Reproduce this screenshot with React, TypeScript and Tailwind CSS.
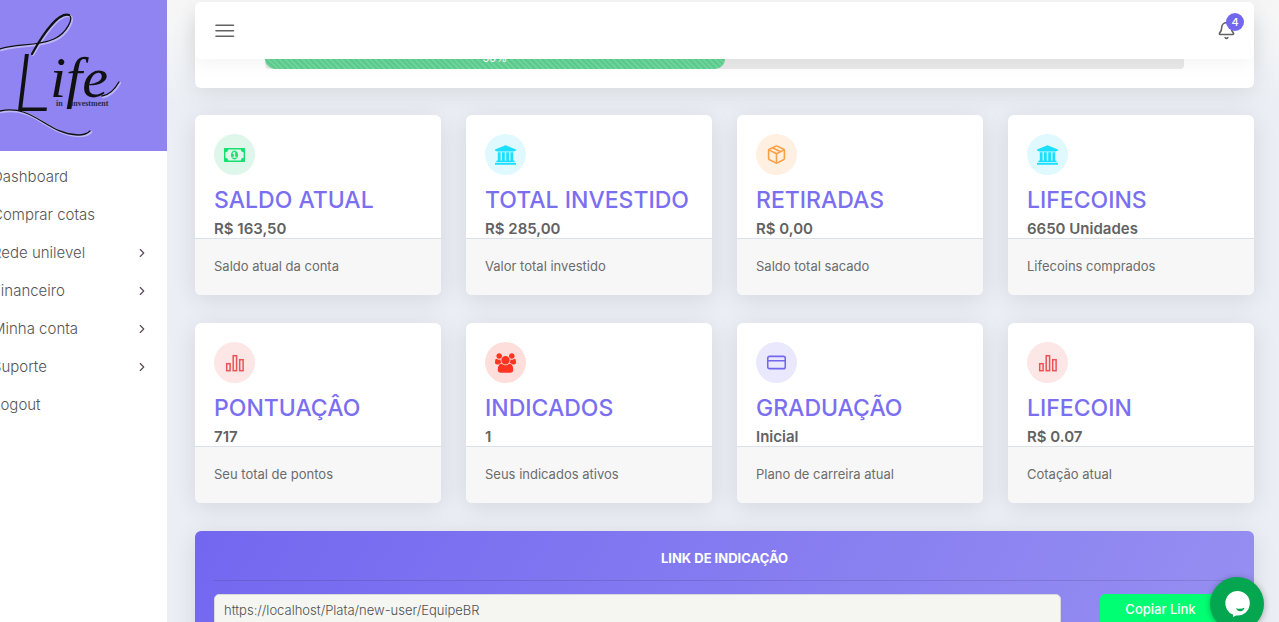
import type { ReactNode } from 'react';
import { Bell, ChevronRight, CreditCard } from 'lucide-react';

function MenuIcon() {
  return (
    <svg viewBox="0 0 22 22" className="size-[22px]" fill="none" stroke="currentColor" strokeWidth="1.6" strokeLinecap="round" aria-hidden="true">
      <path d="M3 5.200h17.500M3 10.700h17.500M3 16.200h17.500" />
    </svg>
  );
}

function MoneyIcon() {
  return (
    <svg viewBox="0 0 1920 1792" className="h-5 w-[21px]" fill="currentColor" aria-hidden="true">
      <path d="M768 1152h384v-96h-128V608H910l-148 137 77 80q42-37 55-57h2v288H768v96zm512-256q0 70-21 142t-59.5 134-101.5 101-138 39-138-39-101-101-59.5-134-21-142 21-142 59.5-134 101-101 138-39 138 39 101.5 101 59.5 134 21 142zM1792 1152V640q-106 0-181-75t-75-181H384q0 106-75 181t-181 75v512q106 0 181 75t75 181h1152q0-106 75-181t181-75zM1920 320v1152q0 26-19 45t-45 19H64q-26 0-45-19t-19-45V320q0-26 19-45t45-19h1792q26 0 45 19t19 45z" fillRule="evenodd" />
    </svg>
  );
}

function BankIcon() {
  return (
    <svg viewBox="0 0 1920 1792" className="h-5 w-[21px]" fill="currentColor" aria-hidden="true">
      <path d="M960 0l960 384v128h-128q0 26-20.5 45T1723 576H197q-28 0-48.5-19T128 512H0V384zM256 640h256v768h128V640h256v768h128V640h256v768h128V640h256v768h59q28 0 48.5 19t20.5 45v64H128v-64q0-26 20.5-45t48.5-19h59V640zm1595 960q28 0 48.5 19t20.5 45v128H0v-128q0-26 20.5-45t48.5-19h1782z" />
    </svg>
  );
}

function BoxIcon() {
  return (
    <svg viewBox="0 0 24 24" className="size-[19px]" fill="none" stroke="currentColor" strokeWidth="2" strokeLinecap="round" strokeLinejoin="round" aria-hidden="true">
      <path d="M12.89 1.45l8 4A2 2 0 0 1 22 7.24v9.53a2 2 0 0 1-1.11 1.79l-8 4a2 2 0 0 1-1.79 0l-8-4a2 2 0 0 1-1.1-1.8V7.24a2 2 0 0 1 1.11-1.79l8-4a2 2 0 0 1 1.78 0z" />
      <path d="M2.32 6.16L12 11l9.68-4.84M12 22.76V11M7 3.5l10 5" />
    </svg>
  );
}

function BarsIcon() {
  return (
    <svg viewBox="0 0 22 22" className="size-[22px]" fill="none" stroke="currentColor" strokeWidth="1.5" aria-hidden="true">
      <rect x="2.7" y="11.7" width="3.4" height="7" />
      <rect x="9.2" y="3.7" width="3.4" height="15" />
      <rect x="15.7" y="7.7" width="3.4" height="11" />
    </svg>
  );
}

function PeopleIcon() {
  return (
    <svg viewBox="-64 0 1920 1792" className="h-5 w-[21px]" fill="currentColor" aria-hidden="true">
      <path d="M529 896q-162 5-265 128H130q-82 0-138-40.5T-64 865q0-353 124-353 6 0 43.5 21t97.5 42.5T320 597q67 0 133-23-5 37-5 66 0 139 81 256zm1071 637q0 120-73 189.5t-194 69.5H459q-121 0-194-69.5T192 1533q0-53 3.5-103.5t14-109T236 1212t43-97.5 62-81 85.5-53.5T538 960q10 0 43 21.5t73 48 107 48 135 21.5 135-21.5 107-48 73-48 43-21.5q61 0 111.5 20t85.5 53.5 62 81 43 97.5 26.5 108.5 14 109 3.5 103.5zM576 256q0 106-75 181t-181 75-181-75-75-181 75-181T320 0t181 75 75 181zm704 384q0 159-112.5 271.5T896 1024 624.5 911.5 512 640t112.5-271.5T896 256t271.5 112.5T1280 640zm576 225q0 78-56 118.5t-138 40.5h-134q-103-123-265-128 81-117 81-256 0-29-5-66 66 23 133 23 59 0 119-21.5t97.5-42.5 43.5-21q124 0 124 353zm-128-609q0 106-75 181t-181 75-181-75-75-181 75-181 181-75 181 75 75 181z" />
    </svg>
  );
}

type Stat = { title: string; value: string; note: string; tone: string; icon: ReactNode };

const stats: Stat[] = [
  { title: 'SALDO ATUAL', value: 'R$ 163,50', note: 'Saldo atual da conta', tone: 'bg-[#dff6ea] text-[#15e070]', icon: <MoneyIcon /> },
  { title: 'TOTAL INVESTIDO', value: 'R$ 285,00', note: 'Valor total investido', tone: 'bg-[#e0f9ff] text-[#1adfff]', icon: <BankIcon /> },
  { title: 'RETIRADAS', value: 'R$ 0,00', note: 'Saldo total sacado', tone: 'bg-[#fff0e2] text-[#ff9f43]', icon: <BoxIcon /> },
  { title: 'LIFECOINS', value: '6650 Unidades', note: 'Lifecoins comprados', tone: 'bg-[#e0f9ff] text-[#1adfff]', icon: <BankIcon /> },
  { title: 'PONTUAÇÂO', value: '717', note: 'Seu total de pontos', tone: 'bg-[#fce6e6] text-[#ea5455]', icon: <BarsIcon /> },
  { title: 'INDICADOS', value: '1', note: 'Seus indicados ativos', tone: 'bg-[#fddeda] text-[#ff3522]', icon: <PeopleIcon /> },
  { title: 'GRADUAÇÃO', value: 'Inicial', note: 'Plano de carreira atual', tone: 'bg-[#eae8fd] text-[#7367f0]', icon: <CreditCard size={21} strokeWidth={1.8} /> },
  { title: 'LIFECOIN', value: 'R$ 0.07', note: 'Cotação atual', tone: 'bg-[#fce6e6] text-[#ea5455]', icon: <BarsIcon /> },
];

const menu = [
  { label: 'Dashboard', nested: false },
  { label: 'Comprar cotas', nested: false },
  { label: 'Rede unilevel', nested: true },
  { label: 'Financeiro', nested: true },
  { label: 'Minha conta', nested: true },
  { label: 'Suporte', nested: true },
  { label: 'Logout', nested: false },
];

function Logo() {
  return (
    <svg viewBox="0 0 167 151" className="ml-auto h-[151px] w-[167px]" role="img" aria-label="Life in investment">
      <g fill="none" stroke="#dcd8fb" strokeLinecap="round" strokeWidth="2.5" opacity=".6" transform="translate(1 1)">
        <path d="M0 49C17 43 36 47 54 39C67 33 74 18 69 15C58 12 42 36 32 54" />
        <path d="M0 111C34 104 46 134 78 135Q86 135 90 131" />
        <path d="M102 96C110 95 115 89 119 82" />
      </g>
      <g fill="none" stroke="#111" strokeLinecap="round">
        <path d="M0 49C17 43 36 47 54 39C67 33 74 18 69 15" strokeWidth="1.3" />
        <path d="M69 15C58 12 42 36 32 54" strokeWidth="2.2" />
        <path d="M0 111C34 104 46 134 78 135Q86 135 90 131" strokeWidth="1.3" />
        <path d="M102 96C110 95 115 89 119 82" strokeWidth="1.3" />
      </g>
      <text x="13" y="111" fontSize="80" fontStyle="italic" fontWeight="300" fill="#111" className="font-['Lato',sans-serif]">L</text>
      <text x="50" y="97" fontSize="58" fontStyle="italic" fill="#111" className="font-['Liberation_Serif',serif]">ife</text>
      <text x="56" y="106" fontSize="8" fontWeight="700" fill="#2d2947" className="font-['Liberation_Serif',serif]">in</text>
      <text x="71" y="106" fontSize="8" fontWeight="700" fill="#2d2947" className="font-['Liberation_Serif',serif]">investment</text>
    </svg>
  );
}

function Sidebar() {
  return (
    <aside className="-ml-[93px] w-[260px] shrink-0 bg-white">
      <a href="#inicio" className="flex bg-[#8f84f1]">
        <Logo />
      </a>
      <nav className="pt-[7px]">
        {menu.map((item) => (
          <a key={item.label} href="#menu" className="flex h-[38px] items-center justify-between pr-[18px] pl-[85px] text-[15px] font-light text-[#555]">
            {item.label}
            {item.nested && <ChevronRight size={14} strokeWidth={2} className="text-[#5c4a5c]" />}
          </a>
        ))}
      </nav>
    </aside>
  );
}

function StatCard({ stat }: { stat: Stat }) {
  return (
    <article className="overflow-hidden rounded-md bg-white shadow-[0_4px_25px_rgba(0,0,0,0.1)]">
      <div className="px-[19px] pt-[19px]">
        <div className={`flex size-[41px] items-center justify-center rounded-full ${stat.tone}`}>{stat.icon}</div>
        <h2 className="mt-[11px] text-[23px] leading-7 font-medium whitespace-nowrap text-[#7b6ff1]">{stat.title}</h2>
        <p className="pt-[5px] text-[15px] leading-[19px] font-semibold text-[#626262]">{stat.value}</p>
      </div>
      <p className="border-t border-[#d9e0e8] bg-[#f7f7f7] px-[19px] pt-[17px] pb-[19px] text-[13px] leading-5 text-[#6c6c6c]">{stat.note}</p>
    </article>
  );
}

export default function App() {
  return (
    <div className="flex h-screen overflow-hidden bg-[#ebeff5] font-['Inter','Noto_Sans',sans-serif] text-[#626262]">
      <Sidebar />
      <div className="relative min-w-0 flex-1 bg-linear-to-b from-[#f8f8f8] to-transparent to-[102px]">
        <header className="absolute inset-x-0 top-0 z-10 bg-linear-to-b from-[#f5f5f5] to-[#f5f5f5]/0 to-[30px] pt-0.5 pr-[25px] pl-7">
          <div className="flex h-[57px] items-center justify-between rounded-md bg-white px-[18px] shadow-[0_4px_20px_rgba(0,0,0,0.05)]">
            <button type="button" aria-label="Menu">
              <MenuIcon />
            </button>
            <button type="button" aria-label="Notificações" className="relative">
              <Bell size={19} strokeWidth={2} />
              <span className="absolute -top-2 -right-2 flex size-[18px] items-center justify-center rounded-full bg-[#7367f0] text-[11px] font-medium text-white">4</span>
            </button>
          </div>
        </header>

        <main className="pr-[25px] pl-7">
          <section className="rounded-b-md bg-white px-[70px] pt-12 pb-[19px] shadow-[0_4px_25px_rgba(0,0,0,0.1)]">
            <div className="h-[21px] rounded bg-[#e9e9e9]">
              <div className="h-full w-1/2 rounded-[10px] bg-[#5bd08e] bg-[repeating-linear-gradient(45deg,rgba(255,255,255,0.14)_0_2px,transparent_2px_4px)] text-center text-[11px] leading-[21px] text-white">
                50%
              </div>
            </div>
          </section>

          <section className="mt-[27px] grid grid-cols-4 gap-x-[25px] gap-y-7">
            {stats.map((stat) => (
              <StatCard key={stat.title} stat={stat} />
            ))}
          </section>

          <section className="mt-7 rounded-md bg-linear-[118deg,#7367f0,rgba(115,103,240,0.7)] px-[19px] pt-[17px] pb-6 shadow-[0_4px_25px_rgba(0,0,0,0.1)]">
            <h2 className="text-center text-[13px] leading-5 font-bold text-white">LINK DE INDICAÇÃO</h2>
            <hr className="mt-3 border-[#22292f]/15" />
            <div className="mt-[13px] flex gap-[39px]">
              <input
                aria-label="Link de indicação"
                readOnly
                defaultValue="https://localhost/Plata/new-user/EquipeBR"
                className="h-8 min-w-0 flex-1 rounded-[5px] border border-[#d9d9d9] bg-[#f5f5f1] px-[9px] text-[13px] font-light text-[#4e5154]"
              />
              <button type="button" className="mr-[14px] h-8 w-[121px] rounded-[5px] bg-[#00ff73] text-[13px] font-medium text-white">
                Copiar Link
              </button>
            </div>
          </section>
        </main>
      </div>

      <button type="button" aria-label="Abrir chat" className="fixed right-[15px] -bottom-[9px] z-20 flex size-[54px] items-center justify-center rounded-full bg-[#04a64f] shadow-[0_1px_6px_rgba(0,0,0,0.3)]">
        <svg viewBox="0 0 28 30" className="h-[30px] w-7" aria-hidden="true">
          <path d="M14 2a12.3 12.3 0 1 1-1 24.5L10 28l.2-2.2A12.3 12.3 0 0 1 14 2z" fill="#fff" />
          <path d="M13 19.2q4.500 1.500 8.500-.5-1 3.500-4.200 3.500-3 0-4.300-3z" fill="#04a64f" />
        </svg>
      </button>
    </div>
  );
}
